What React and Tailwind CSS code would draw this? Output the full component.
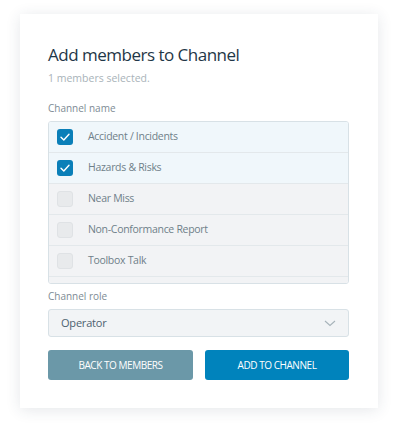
const channels = [
  { name: "Accident / Incidents", checked: true },
  { name: "Hazards & Risks", checked: true },
  { name: "Near Miss", checked: false },
  { name: "Non-Conformance Report", checked: false },
  { name: "Toolbox Talk", checked: false },
  { name: "", checked: false },
];

const CheckIcon = () => (
  <svg width="10" height="8" viewBox="0 0 10 8" fill="none">
    <path d="M1 4.2L3.8 7L9 1.2" stroke="white" strokeWidth="1.4" strokeLinecap="round" strokeLinejoin="round" />
  </svg>
);

const ChannelRow = ({ channel }) => (
  <div
    className={`flex items-center h-[31px] shrink-0 border-b border-[#e3e8eb] pl-[8px] ${
      channel.checked ? "bg-[#f0f7fb]" : "bg-[#f2f3f5]"
    }`}>
    {channel.checked ? (
      <div className="w-[16px] h-[16px] rounded-[3px] bg-[#0a7fb8] flex items-center justify-center">
        <CheckIcon />
      </div>
    ) : (
      <div className="w-[16px] h-[16px] rounded-[3px] bg-[#e8eaec] border border-[#dfe2e5]" />
    )}
    {channel.name && (
      <span className="ml-[15px] text-[10.5px] tracking-[-0.3px] text-[#6f7f89]">{channel.name}</span>
    )}
  </div>
);

const App = () => {
  return (
    <div
      className="w-[407px] h-[431px] bg-white pt-[14px] pl-[20px]"
      style={{ fontFamily: '"Open Sans", "Noto Sans", sans-serif' }}>
      {/* Card */}
      <div className="w-[358px] h-[394px] bg-white shadow-[0_2px_14px_rgba(40,60,80,0.12)] pt-[29px] px-[28px]">
        <h1 className="text-[17px] leading-[24px] tracking-[-0.5px] text-[#1f3747]">Add members to Channel</h1>
        <p className="mt-[4px] text-[10.5px] leading-[14px] text-[#a9b3b9]">1 members selected.</p>

        <p className="mt-[16px] text-[10px] leading-[14px] text-[#7d8b94]">Channel name</p>
        <div className="mt-[6px] w-[301px] h-[163px] border border-[#d8e1e6] rounded-[3px] overflow-hidden flex flex-col">
          {channels.map((c, i) => (
            <ChannelRow key={i} channel={c} />
          ))}
        </div>

        <p className="mt-[5px] text-[10px] leading-[14px] text-[#7d8b94]">Channel role</p>
        <div className="mt-[6px] w-[301px] h-[28px] border border-[#d8e1e6] rounded-[3px] bg-[#f2f4f6] flex items-center justify-between pl-[12px] pr-[12px]">
          <span className="text-[11px] tracking-[-0.2px] text-[#4d6270]">Operator</span>
          <svg width="12" height="7" viewBox="0 0 12 7" fill="none">
            <path d="M1 1L6 5.5L11 1" stroke="#a7b3ba" strokeWidth="1.1" />
          </svg>
        </div>

        {/* Buttons */}
        <div className="mt-[13px] flex gap-[12px]">
          <button className="w-[145px] h-[30px] rounded-[3px] bg-[#6b98a8] text-white text-[10px] font-medium tracking-[-0.45px]">
            BACK TO MEMBERS
          </button>
          <button className="w-[144px] h-[30px] rounded-[3px] bg-[#0083bc] text-white text-[10px] font-medium tracking-[-0.45px]">
            ADD TO CHANNEL
          </button>
        </div>
      </div>
    </div>
  );
};

export default App;
